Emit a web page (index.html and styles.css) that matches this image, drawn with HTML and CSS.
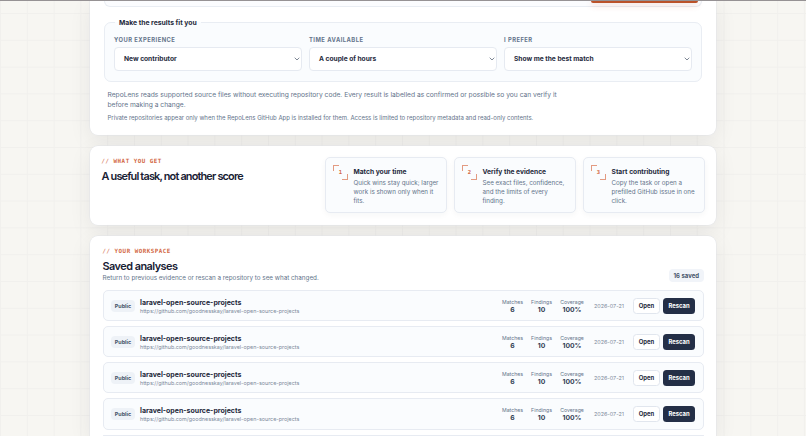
FILE: index.html
```html
<!DOCTYPE html>
<html lang="en">

<head>
    <meta charset="UTF-8">
    <title>RepoLens</title>
    <link rel="stylesheet" href="styles.css">
</head>

<body>

    <main class="page">
        <section class="panel analyze">
            <div class="repo-box">
                <div class="analyze-btn"></div>
            </div>
            <fieldset class="fit">
                <legend>Make the results fit you</legend>
                <div class="fields">
                    <label class="field">
                        <span>Your experience</span>
                        <div class="select">New contributor <svg viewBox="0 0 6 4"><path d="M.7.7 3 3 5.3.7"/></svg></div>
                    </label>
                    <label class="field">
                        <span>Time available</span>
                        <div class="select">A couple of hours <svg viewBox="0 0 6 4"><path d="M.7.7 3 3 5.3.7"/></svg></div>
                    </label>
                    <label class="field">
                        <span>I prefer</span>
                        <div class="select">Show me the best match <svg viewBox="0 0 6 4"><path d="M.7.7 3 3 5.3.7"/></svg></div>
                    </label>
                </div>
            </fieldset>
            <p class="note">RepoLens reads supported source files without executing repository code. Every result is labelled as confirmed or possible so you can verify it<br>before making a change.</p>
            <p class="private">Private repositories appear only when the RepoLens GitHub App is installed for them. Access is limited to repository metadata and read-only contents.</p>
        </section>

        <section class="panel get">
            <div class="get-title">
                <div class="eyebrow"><i>//</i> What you get</div>
                <h2>A useful task, not another score</h2>
            </div>
            <div class="steps">
                <div class="step">
                    <span class="num">1</span>
                    <div>
                        <h3>Match your time</h3>
                        <p>Quick wins stay quick; larger<br>work is shown only when it<br>fits.</p>
                    </div>
                </div>
                <div class="step">
                    <span class="num">2</span>
                    <div>
                        <h3>Verify the evidence</h3>
                        <p>See exact files, confidence,<br>and the limits of every<br>finding.</p>
                    </div>
                </div>
                <div class="step">
                    <span class="num">3</span>
                    <div>
                        <h3>Start contributing</h3>
                        <p>Copy the task or open a<br>prefilled GitHub issue in one<br>click.</p>
                    </div>
                </div>
            </div>
        </section>

        <section class="panel workspace">
            <div class="head">
                <div>
                    <div class="eyebrow"><i>//</i> Your workspace</div>
                    <h2>Saved analyses</h2>
                    <p>Return to previous evidence or rescan a repository to see what changed.</p>
                </div>
                <span class="count">16 saved</span>
            </div>
            <div class="rows">
                <div class="row">
                    <span class="badge">Public</span>
                    <div class="repo"><b>laravel-open-source-projects</b><span>https://github.com/goodnesskay/laravel-open-source-projects</span></div>
                    <div class="stat matches">Matches<b>6</b></div>
                    <div class="stat findings">Findings<b>10</b></div>
                    <div class="stat coverage">Coverage<b>100%</b></div>
                    <span class="date">2026-07-21</span>
                    <div class="btn open">Open</div>
                    <div class="btn rescan">Rescan</div>
                </div>
                <div class="row">
                    <span class="badge">Public</span>
                    <div class="repo"><b>laravel-open-source-projects</b><span>https://github.com/goodnesskay/laravel-open-source-projects</span></div>
                    <div class="stat matches">Matches<b>6</b></div>
                    <div class="stat findings">Findings<b>10</b></div>
                    <div class="stat coverage">Coverage<b>100%</b></div>
                    <span class="date">2026-07-21</span>
                    <div class="btn open">Open</div>
                    <div class="btn rescan">Rescan</div>
                </div>
                <div class="row">
                    <span class="badge">Public</span>
                    <div class="repo"><b>laravel-open-source-projects</b><span>https://github.com/goodnesskay/laravel-open-source-projects</span></div>
                    <div class="stat matches">Matches<b>6</b></div>
                    <div class="stat findings">Findings<b>10</b></div>
                    <div class="stat coverage">Coverage<b>100%</b></div>
                    <span class="date">2026-07-21</span>
                    <div class="btn open">Open</div>
                    <div class="btn rescan">Rescan</div>
                </div>
                <div class="row">
                    <span class="badge">Public</span>
                    <div class="repo"><b>laravel-open-source-projects</b><span>https://github.com/goodnesskay/laravel-open-source-projects</span></div>
                    <div class="stat matches">Matches<b>6</b></div>
                    <div class="stat findings">Findings<b>10</b></div>
                    <div class="stat coverage">Coverage<b>100%</b></div>
                    <span class="date">2026-07-21</span>
                    <div class="btn open">Open</div>
                    <div class="btn rescan">Rescan</div>
                </div>
                <div class="row last"></div>
            </div>
        </section>
    </main>

</body>

</html>
```
FILE: styles.css
```css
* {
  box-sizing: border-box;
}

body, h2, h3, p {
  margin: 0;
}

body {
  height: 436px;
  overflow: hidden;
  border-top: 1px solid #969294;
  font-family: Inter, "Liberation Sans", sans-serif;
  color: #1e293b;
  background-color: #f7f6f2;
  background-image:
    linear-gradient(#f1f0ed 1px, transparent 1px),
    linear-gradient(90deg, #f1f0ed 1px, transparent 1px);
  background-size: 26.8px 26.8px;
  background-position: 0 13px;
}

.page {
  width: 626px;
  margin: 0 auto;
  display: flex;
  flex-direction: column;
  gap: 11px;
}

.panel {
  background: #fff;
  border-radius: 8px;
  box-shadow: 0 0 0 .5px #e2e4e8, 0 6px 22px rgba(30, 30, 40, .08);
}

/* analyze form */
.analyze {
  height: 134px;
  padding: 0 14px;
  border-radius: 0 0 8px 8px;
}

.repo-box {
  height: 6px;
  padding-right: 3px;
  border: 1px solid #e9edf3;
  border-top: 0;
  border-radius: 0 0 6px 6px;
  background: #fbfcfe;
}

.analyze-btn {
  width: 107px;
  height: 2px;
  margin-left: auto;
  background: #bb5229;
  border-radius: 0 0 3px 3px;
  box-shadow: 0 2px 6px rgba(210, 80, 35, .3);
}

.fit {
  height: 64px;
  margin: 11px 0 0;
  padding: 9px 9px 0;
  border: 1px solid #e9edf3;
  border-radius: 7px;
  background: #fafcfe;
}

.fit legend {
  height: 9px;
  margin-left: 1px;
  padding: 0 4px;
  font-size: 6.8px;
  line-height: 9px;
  font-weight: 700;
}

.fields {
  display: grid;
  grid-template-columns: 188px 188px 188px;
  gap: 7px;
}

.field span {
  display: block;
  height: 11px;
  font-size: 5.8px;
  line-height: 7px;
  font-weight: 700;
  letter-spacing: .48px;
  text-transform: uppercase;
  color: #64748b;
}

.select {
  display: flex;
  align-items: center;
  justify-content: space-between;
  height: 24px;
  padding: 0 1px 0 9px;
  border: 1px solid #e6eaf1;
  border-radius: 4px;
  background: #fff;
  font-size: 6.65px;
  font-weight: 700;
}

.select svg {
  width: 6px;
  height: 4px;
  fill: none;
  stroke: #475569;
  stroke-width: .7;
}

.note {
  margin: 8px 0 0 3.5px;
  font-size: 6.68px;
  line-height: 10px;
  color: #64748b;
  white-space: nowrap;
}

.private {
  margin: 4px 0 0 3.5px;
  font-size: 6.01px;
  line-height: 8px;
  color: #64748b;
  white-space: nowrap;
}

/* what you get */
.get {
  display: flex;
  justify-content: space-between;
  height: 79px;
  padding: 11px 11px 0 11.5px;
}

.eyebrow {
  font-family: "DejaVu Sans Mono", monospace;
  font-size: 5.8px;
  line-height: 8px;
  font-weight: 700;
  letter-spacing: .53px;
  text-transform: uppercase;
  color: #d26743;
}

.eyebrow i {
  font-weight: 400;
  font-style: normal;
}

h2 {
  font-size: 10.9px;
  line-height: 14px;
  font-weight: 600;
  color: #172033;
}

.get h2 {
  margin-top: 4px;
  letter-spacing: -.82px;
}

.steps {
  display: grid;
  grid-template-columns: 122px 122px 122px;
  gap: 7px;
}

.step {
  display: flex;
  gap: 5.5px;
  height: 56px;
  padding: 7px 0 0 7px;
  border: 1px solid #e7ebf2;
  border-radius: 5px;
  background: #fafcfe;
  box-shadow: 0 2px 6px rgba(30, 41, 59, .04);
}

/* number inside two corner brackets */
.num {
  width: 15px;
  height: 15px;
  background:
    linear-gradient(#e39b82, #e39b82) 0 0 / 6px 1px,
    linear-gradient(#e39b82, #e39b82) 0 0 / 1px 6px,
    linear-gradient(#e39b82, #e39b82) 100% 100% / 6px 1px,
    linear-gradient(#e39b82, #e39b82) 100% 100% / 1px 6px;
  background-repeat: no-repeat;
  font: 700 5.5px/15px "DejaVu Sans Mono", monospace;
  text-align: center;
  color: #d26743;
}

.step h3 {
  margin-top: 3px;
  font-size: 6.7px;
  line-height: 9px;
  font-weight: 700;
  white-space: nowrap;
}

.step p {
  margin-top: 2px;
  font-size: 6.25px;
  line-height: 9.2px;
  color: #64748b;
  white-space: nowrap;
}

/* saved analyses */
.workspace {
  height: 200px;
  padding: 11.4px 12.5px 0;
  border-radius: 8px 8px 0 0;
}

.head {
  display: flex;
  justify-content: space-between;
  align-items: flex-end;
  height: 36px;
}

.head h2 {
  margin-top: 4px;
  letter-spacing: -.52px;
}

.head p {
  font-size: 6.3px;
  line-height: 10px;
  color: #64748b;
}

.count {
  width: 34.5px;
  height: 13px;
  margin-bottom: 1px;
  border-radius: 4px;
  background: #f1f4f9;
  font-size: 6px;
  line-height: 13px;
  font-weight: 700;
  text-align: center;
  color: #475569;
}

.rows {
  display: flex;
  flex-direction: column;
  gap: 5px;
  margin-top: 6.8px;
}

.row {
  display: flex;
  align-items: center;
  height: 31.1px;
  padding: 0 7.5px;
  border: 1px solid #e7ebf2;
  border-radius: 5px;
  background: #fafcfe;
}

/* only the top edge of the next row is in view */
.row.last {
  height: 1px;
  border-bottom: 0;
  border-radius: 5px 5px 0 0;
}

.badge {
  width: 24px;
  height: 12px;
  border-radius: 4px;
  background: #eef2f7;
  font-size: 5.4px;
  line-height: 12px;
  font-weight: 700;
  text-align: center;
  color: #475569;
}

.repo {
  flex: 1;
  margin-left: 5px;
  padding-top: 1.5px;
}

.repo b {
  display: block;
  font-size: 7px;
  line-height: 9px;
}

.repo span {
  display: block;
  font-size: 5.4px;
  line-height: 8px;
  color: #7d899b;
}

.stat {
  padding-top: 1.5px;
  font-size: 5.2px;
  line-height: 7px;
  text-align: center;
  color: #64748b;
}

.stat b {
  display: block;
  font-size: 6.8px;
  line-height: 8px;
  color: #334155;
}

.matches {
  width: 21px;
}

.findings {
  width: 21px;
  margin-left: 8px;
}

.coverage {
  width: 24px;
  margin-left: 8px;
}

.date {
  width: 30px;
  margin: 0 9px 0 10px;
  font-size: 5.4px;
  color: #7d899b;
}

.btn {
  height: 16px;
  border-radius: 3.5px;
  font-size: 5.9px;
  font-weight: 700;
  text-align: center;
}

.open {
  width: 27px;
  border: 1px solid #e1e6ee;
  background: #fff;
  line-height: 14px;
}

.rescan {
  width: 32px;
  margin-left: 3px;
  background: #242f47;
  color: #fff;
  line-height: 16px;
}
```
